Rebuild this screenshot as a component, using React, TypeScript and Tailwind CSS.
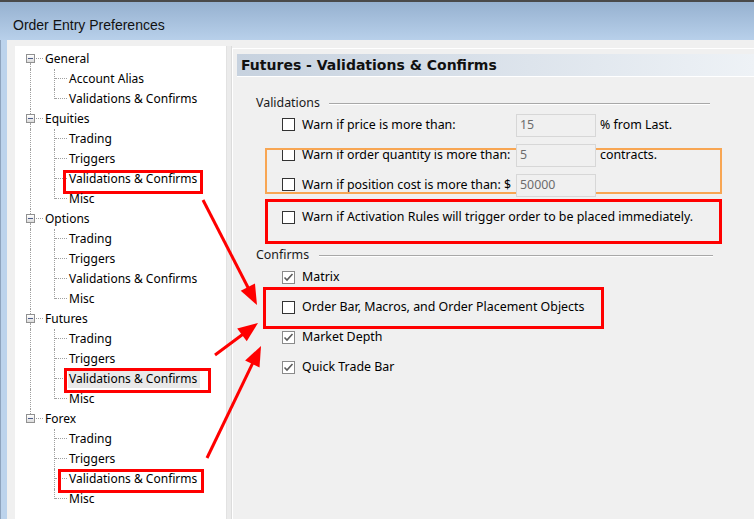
import React from "react";

const FONT = { fontFamily: '"Noto Sans", "Liberation Sans", Arial, sans-serif' };

type Group = {
  name: string;
  children: string[];
  box?: { idx: number; left: number; top: number; w: number; h: number };
  selected?: number;
};

const groups: Group[] = [
  { name: "General", children: ["Account Alias", "Validations & Confirms"] },
  {
    name: "Equities",
    children: ["Trading", "Triggers", "Validations & Confirms", "Misc"],
    box: { idx: 2, left: 48, top: 1, w: 140, h: 24 },
  },
  { name: "Options", children: ["Trading", "Triggers", "Validations & Confirms", "Misc"] },
  {
    name: "Futures",
    children: ["Trading", "Triggers", "Validations & Confirms", "Misc"],
    box: { idx: 2, left: 49, top: -1, w: 147, h: 25 },
    selected: 2,
  },
  {
    name: "Forex",
    children: ["Trading", "Triggers", "Validations & Confirms", "Misc"],
    box: { idx: 2, left: 43, top: 0, w: 146, h: 24 },
  },
];

function MinusBox() {
  return (
    <span className="absolute left-[11px] top-[5px] w-[9px] h-[9px] border border-[#919191] bg-gradient-to-b from-white to-[#dcdcdc] flex items-center justify-center">
      <span className="block w-[5px] h-[1px] bg-[#4e5d8a]" />
    </span>
  );
}

function TreeGroup({ g, first, last }: { g: Group; first: boolean; last: boolean }) {
  return (
    <div>
      <div className="relative h-[20px]">
        {!first && (
          <span className="absolute left-[15px] top-0 h-[5px] border-l border-dotted border-[#a0a0a0]" />
        )}
        {!last && (
          <span className="absolute left-[15px] top-[14px] h-[6px] border-l border-dotted border-[#a0a0a0]" />
        )}
        <MinusBox />
        <span className="absolute left-[21px] top-[9px] w-[7px] border-t border-dotted border-[#a0a0a0]" />
        <span className="absolute left-[30px] top-0 h-[20px] flex items-center text-[12px] text-black whitespace-nowrap">
          {g.name}
        </span>
      </div>
      {g.children.map((c, i) => {
        const lastChild = i === g.children.length - 1;
        const sel = g.selected === i;
        return (
          <div key={i} className="relative h-[20px]">
            {!last && (
              <span className="absolute left-[15px] top-0 h-[20px] border-l border-dotted border-[#a0a0a0]" />
            )}
            <span
              className={
                "absolute left-[39px] top-0 border-l border-dotted border-[#a0a0a0] " +
                (lastChild ? "h-[10px]" : "h-[20px]")
              }
            />
            <span className="absolute left-[40px] top-[9px] w-[12px] border-t border-dotted border-[#a0a0a0]" />
            <span
              className={
                "absolute left-[53px] top-[1px] h-[18px] pl-[1px] pr-[3px] flex items-center text-[12px] text-black whitespace-nowrap " +
                (sel ? "bg-[#e9e9e9]" : "")
              }
            >
              {c}
            </span>
            {g.box && g.box.idx === i && (
              <span
                className="absolute border-[3px] border-[#ff0000]"
                style={{ left: g.box.left, top: g.box.top, width: g.box.w, height: g.box.h }}
              />
            )}
          </div>
        );
      })}
    </div>
  );
}

function CheckBox({ checked }: { checked?: boolean }) {
  return (
    <span
      className={
        "relative w-[13px] h-[13px] shrink-0 bg-white border " +
        (checked ? "border-[#8a8a8a]" : "border-[#333333]")
      }
    >
      {checked && (
        <svg className="absolute left-0 top-0" width="11" height="11" viewBox="0 0 11 11">
          <polyline points="1.5,5.5 4,8 9.5,2" fill="none" stroke="#5c5c5c" strokeWidth="1.6" />
        </svg>
      )}
    </span>
  );
}

function Input({ value }: { value: string }) {
  return (
    <span className="relative z-10 w-[80px] h-[23px] shrink-0 bg-[#f0f0f0] border border-[#d7d7d7] pl-[3px] flex items-center text-[12.4px] text-[#6d6d6d]">
      {value}
    </span>
  );
}

function ValRow({ label, value, suffix }: { label: string; value: string; suffix?: string }) {
  return (
    <div className="h-[30px] flex items-center pl-[26px]">
      <div className="w-[234px] flex items-center gap-[7px]">
        <CheckBox />
        <span className="text-[12.4px] text-black whitespace-nowrap">{label}</span>
      </div>
      <Input value={value} />
      {suffix && <span className="ml-[4px] text-[12.4px] text-black whitespace-nowrap">{suffix}</span>}
    </div>
  );
}

function ConfRow({ label, checked }: { label: string; checked?: boolean }) {
  return (
    <div className="h-[30px] flex items-center pl-[26px] gap-[7px]">
      <CheckBox checked={checked} />
      <span className="text-[12.4px] text-black whitespace-nowrap">{label}</span>
    </div>
  );
}

function GroupLabel({ label, lineStart, mr }: { label: string; lineStart: string; mr: string }) {
  return (
    <div className={"flex items-center h-[13px] " + mr}>
      <span className="text-[12.4px] text-[#1a1a1a] whitespace-nowrap">{label}</span>
      <span className={"flex-1 h-[2px] border-t border-[#a8a8a8] border-b border-b-white " + lineStart} />
    </div>
  );
}

function Arrow({ x1, y1, x2, y2 }: { x1: number; y1: number; x2: number; y2: number }) {
  const dx = x2 - x1;
  const dy = y2 - y1;
  const len = Math.sqrt(dx * dx + dy * dy);
  const ux = dx / len;
  const uy = dy / len;
  const hl = 20;
  const hw = 8;
  const bx = x2 - ux * hl;
  const by = y2 - uy * hl;
  const px = -uy;
  const py = ux;
  const pts = `${x2},${y2} ${bx + px * hw},${by + py * hw} ${bx - px * hw},${by - py * hw}`;
  return (
    <g>
      <line x1={x1} y1={y1} x2={bx + ux * 2} y2={by + uy * 2} stroke="#ff0000" strokeWidth="3" />
      <polygon points={pts} fill="#ff0000" />
    </g>
  );
}

export default function App() {
  return (
    <div className="relative w-[754px] h-[519px] overflow-hidden flex flex-col" style={FONT}>
      {/* Title bar */}
      <div className="h-[40px] shrink-0 border-t-2 border-[#4a4a4a] bg-gradient-to-b from-[#96b1d0] to-[#b8d0ea] flex items-center pl-[13px] pt-[8px]">
        <span
          className="text-[14px] text-[#111]"
          style={{ fontFamily: '"Liberation Sans", Arial, sans-serif' }}
        >
          Order Entry Preferences
        </span>
      </div>
      <div className="flex flex-1 min-h-0">
        <div className="w-[7px] shrink-0 bg-[#bcd3ec] border-l border-[#8ea3bd]" />
        <div className="flex-1 bg-[#f0f0f0] flex pt-[6px] pl-[8px]">
          {/* Tree */}
          <div className="w-[212px] shrink-0 bg-white border-r border-[#e2e2e2] pt-[3px]">
            {groups.map((g, i) => (
              <TreeGroup key={g.name} g={g} first={i === 0} last={i === groups.length - 1} />
            ))}
          </div>
          <div className="w-[5px] shrink-0 border-r border-[#dcdcdc] bg-[#ebebeb]" />
          {/* Right panel */}
          <div className="relative flex-1 mt-[2px] border-l border-t border-white flex flex-col">
            <div className="mt-[5px] ml-[4px] h-[23px] bg-gradient-to-r from-[#c7d2df] to-[#eef2f6] border-b border-white flex items-center pl-[4px]">
              <span
                className="text-[14px] font-bold text-[#111] whitespace-nowrap"
                style={{ fontFamily: '"DejaVu Sans", Verdana, sans-serif' }}
              >
                Futures - Validations &amp; Confirms
              </span>
            </div>
            <div className="pl-[23px] pt-[20px]">
              <GroupLabel label="Validations" lineStart="ml-[9px]" mr="mr-[44px]" />
              <ValRow label="Warn if price is more than:" value="15" suffix="% from Last." />
              <ValRow label="Warn if order quantity is more than:" value="5" suffix="contracts." />
              <ValRow label="Warn if position cost is more than: $" value="50000" />
              <div className="mt-[2px]">
                <ConfRow label="Warn if Activation Rules will trigger order to be placed immediately." />
              </div>
              <div className="mt-[17px]">
                <GroupLabel label="Confirms" lineStart="ml-[10px]" mr="mr-[41px]" />
              </div>
              <div>
                <ConfRow label="Matrix" checked />
                <ConfRow label="Order Bar, Macros, and Order Placement Objects" />
                <ConfRow label="Market Depth" checked />
                <ConfRow label="Quick Trade Bar" checked />
              </div>
            </div>
            {/* annotation boxes */}
            <span className="absolute left-[32px] top-[99px] w-[457px] h-[46px] border-2 border-[#f8a653]" />
            <span className="absolute left-[32px] top-[150px] w-[457px] h-[45px] border-[3px] border-[#ff0000]" />
            <span className="absolute left-[30px] top-[238px] w-[341px] h-[42px] border-[3px] border-[#ff0000]" />
          </div>
        </div>
      </div>
      <svg className="absolute left-0 top-0 pointer-events-none" width="754" height="519">
        <Arrow x1={203} y1={200} x2={257} y2={305} />
        <Arrow x1={215} y1={355} x2={258} y2={323} />
        <Arrow x1={207} y1={458} x2={261} y2={346} />
      </svg>
    </div>
  );
}
